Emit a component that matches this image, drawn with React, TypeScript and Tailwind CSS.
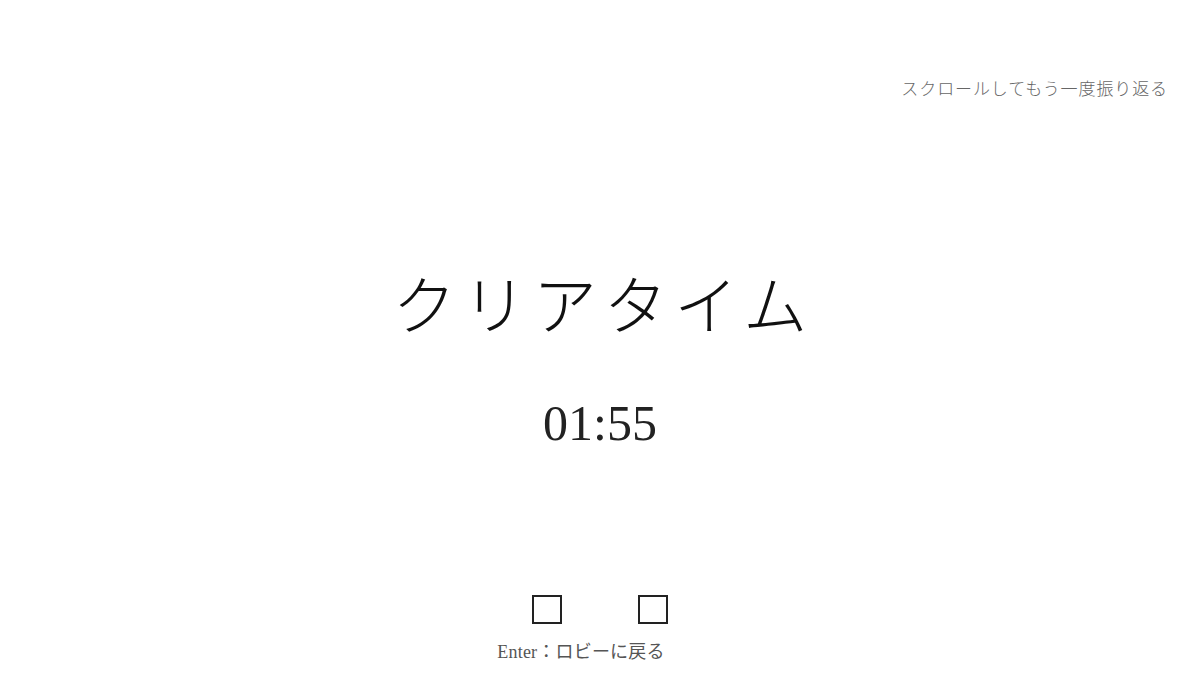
import React from "react";

const SERIF = "font-['Liberation_Serif','Noto_Sans_CJK_JP',serif]";

function Tofu() {
  return <div className="h-[29px] w-[30px] border-2 border-[#222]" />;
}

export default function App() {
  return (
    <div className={`flex h-[675px] w-full flex-col bg-white ${SERIF}`}>
      {/* scroll hint */}
      <div className="flex justify-end pr-[32px] pt-[78px]">
        <p className="text-[17px] leading-6 tracking-[0.9px] font-light text-[#666]">
          スクロールしてもう一度振り返る
        </p>
      </div>

      {/* result */}
      <div className="mt-[174px] flex flex-col items-center">
        <h1 className="pl-[6px] text-[64px] leading-[64px] font-light tracking-[6.5px] text-[#111]">
          クリアタイム
        </h1>
        <p className="mt-[58px] text-[50px] leading-[50px] text-[#222]">01:55</p>
      </div>

      {/* footer */}
      <div className="mt-[147px] flex flex-col items-center">
        <div className="flex gap-[76px]">
          <Tofu />
          <Tofu />
        </div>
        <p className="mr-[38px] mt-[19px] text-[18px] leading-[18px] tracking-[0.2px] text-[#555]">
          Enter：ロビーに戻る
        </p>
      </div>
    </div>
  );
}
